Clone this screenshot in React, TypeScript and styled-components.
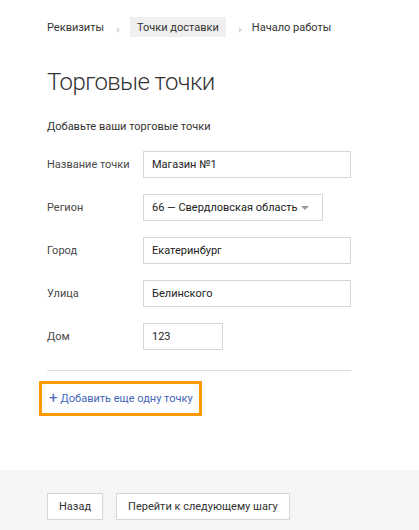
import React from 'react';
import styled, { createGlobalStyle } from 'styled-components';

const GlobalStyle = createGlobalStyle`
  html, body {
    margin: 0;
    padding: 0;
    background: #fff;
    font-family: Roboto, 'Open Sans', sans-serif;
    color: #333;
  }
`;

const Page = styled.div`
  display: flex;
  flex-direction: column;
  width: 419px;
  min-height: 530px;
`;

const Content = styled.div`
  flex: 1;
  padding: 17px 0 0 47px;
`;

const Breadcrumbs = styled.nav`
  display: flex;
  align-items: center;
  height: 20px;
  font-size: 11px;
`;

const Crumb = styled.span<{ $active?: boolean }>`
  display: flex;
  align-items: center;
  height: 20px;
  padding: 0 ${({ $active }) => ($active ? '7px' : '0')};
  background: ${({ $active }) => ($active ? '#efefef' : 'transparent')};
  color: #333;
`;

const Arrow = styled.span`
  width: 0;
  height: 0;
  margin: 5px 10px 0 13px;
  border-top: 3px solid transparent;
  border-bottom: 3px solid transparent;
  border-left: 3px solid #d8d8d8;
`;

const Title = styled.h1`
  margin: 28px 0 0;
  font-size: 24px;
  line-height: 34px;
  font-weight: 300;
  letter-spacing: -0.6px;
  color: #333;
`;

const Subtitle = styled.p`
  margin: 20px 0 0;
  font-size: 11px;
  line-height: 16px;
  color: #333;
`;

const Form = styled.div`
  display: flex;
  flex-direction: column;
  gap: 16px;
  margin-top: 16px;
  width: 304px;
`;

const Row = styled.div`
  display: flex;
  align-items: center;
  height: 27px;
`;

const Label = styled.label`
  width: 96px;
  flex-shrink: 0;
  font-size: 11px;
  color: #484848;
`;

const Field = styled.div<{ $width: number }>`
  display: flex;
  align-items: center;
  box-sizing: border-box;
  width: ${({ $width }) => $width}px;
  height: 27px;
  padding: 0 8px;
  border: 1px solid #d6d6d6;
  font-size: 11px;
  color: #222;
  white-space: nowrap;
`;

const SelectText = styled.span`
  flex: 1;
`;

const Caret = styled.span`
  width: 0;
  height: 0;
  margin-right: 5px;
  border-left: 4px solid transparent;
  border-right: 4px solid transparent;
  border-top: 4px solid #999;
`;

const Divider = styled.hr`
  width: 304px;
  margin: 20px 0 0;
  border: 0;
  border-top: 1px solid #dcdcdc;
`;

const AddBox = styled.div`
  display: inline-flex;
  align-items: center;
  box-sizing: border-box;
  margin: 10px 0 0 -8px;
  height: 35px;
  padding: 0 6px 0 7px;
  border: 3px solid #ff9900;
  font-size: 11px;
  color: #4466bb;
  gap: 3px;
`;

const Plus = styled.span`
  font-size: 15px;
  line-height: 1;
`;

const Footer = styled.div`
  display: flex;
  gap: 13px;
  margin-top: 54px;
  height: 61px;
  box-sizing: border-box;
  padding: 23px 0 0 47px;
  background: #f5f5f5;
`;

const Button = styled.button`
  box-sizing: border-box;
  height: 27px;
  padding: 0 11px;
  background: #fff;
  border: 1px solid #d6d6d6;
  font-family: inherit;
  font-size: 11px;
  color: #333;
`;

const fields = [
  { label: 'Название точки', value: 'Магазин №1', width: 208 },
  { label: 'Город', value: 'Екатеринбург', width: 208 },
  { label: 'Улица', value: 'Белинского', width: 208 },
  { label: 'Дом', value: '123', width: 80 },
];

export default function App(): React.ReactElement {
  const [first, ...rest] = fields;
  return (
    <Page>
      <GlobalStyle />
      <Content>
        <Breadcrumbs>
          <Crumb>Реквизиты</Crumb>
          <Arrow />
          <Crumb $active>Точки доставки</Crumb>
          <Arrow />
          <Crumb>Начало работы</Crumb>
        </Breadcrumbs>
        <Title>Торговые точки</Title>
        <Subtitle>Добавьте ваши торговые точки</Subtitle>
        <Form>
          <Row>
            <Label>{first.label}</Label>
            <Field $width={first.width}>{first.value}</Field>
          </Row>
          <Row>
            <Label>Регион</Label>
            <Field $width={180}>
              <SelectText>66 — Свердловская область</SelectText>
              <Caret />
            </Field>
          </Row>
          {rest.map((f) => (
            <Row key={f.label}>
              <Label>{f.label}</Label>
              <Field $width={f.width}>{f.value}</Field>
            </Row>
          ))}
        </Form>
        <Divider />
        <AddBox>
          <Plus>+</Plus>
          Добавить еще одну точку
        </AddBox>
      </Content>
      <Footer>
        <Button>Назад</Button>
        <Button>Перейти к следующему шагу</Button>
      </Footer>
    </Page>
  );
}
